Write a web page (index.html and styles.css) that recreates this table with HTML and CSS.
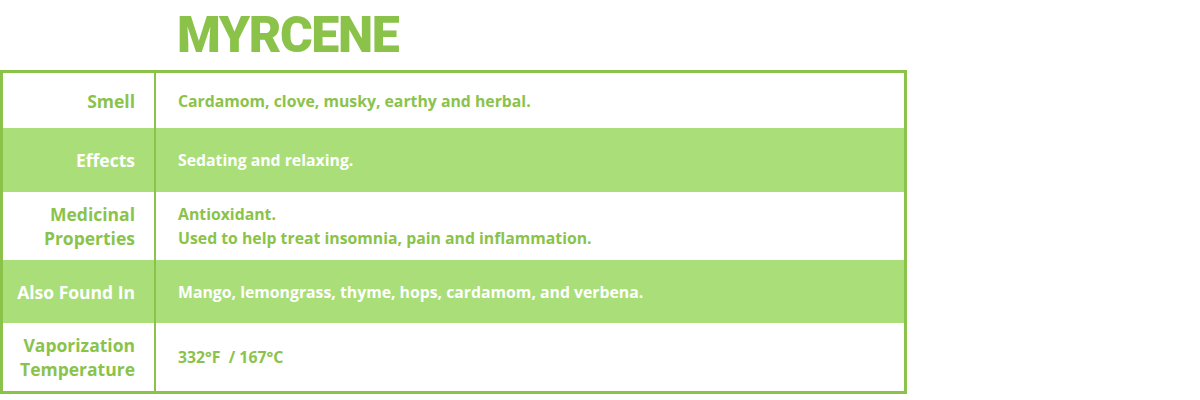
FILE: index.html
```html
<!DOCTYPE html>
<html>
<head>
<meta charset="utf-8">
<link rel="stylesheet" href="styles.css">
</head>
<body>
<div class="page">
  <h1 class="title">MYRCENE</h1>
  <div class="sheet">
    <div class="row row-a">
      <div class="label">Smell</div>
      <div class="value">Cardamom, clove, musky, earthy and herbal.</div>
    </div>
    <div class="row row-b alt">
      <div class="label">Effects</div>
      <div class="value">Sedating and relaxing.</div>
    </div>
    <div class="row row-c">
      <div class="label">Medicinal<br>Properties</div>
      <div class="value">Antioxidant.<br>Used to help treat insomnia, pain and inflammation.</div>
    </div>
    <div class="row row-d alt">
      <div class="label">Also Found In</div>
      <div class="value">Mango, lemongrass, thyme, hops, cardamom, and verbena.</div>
    </div>
    <div class="row row-e">
      <div class="label">Vaporization<br>Temperature</div>
      <div class="value">332°F &nbsp;/ 167°C</div>
    </div>
  </div>
</div>
</body>
</html>
```
FILE: styles.css
```css
* { box-sizing: border-box; }
html, body { margin: 0; padding: 0; background: #fff; }
body {
  font-family: "Open Sans", "Liberation Sans", sans-serif;
  color: #8bc34a;
}
.page { width: 907px; }
.title {
  margin: 0;
  padding: 5px 0 0 177px;
  height: 70px;
  font-family: Roboto, "Open Sans", sans-serif;
  font-size: 50px;
  line-height: 60px;
  font-weight: 900;
  color: #8bc34a;
  letter-spacing: -1.4px;
}
.sheet {
  border: 3px solid #8bc34a;
  display: flex;
  flex-direction: column;
}
.row {
  display: grid;
  grid-template-columns: 153px 1fr;
  align-items: stretch;
  font-weight: 700;
  line-height: 24px;
}
.row-a { height: 55px; }
.row-b { height: 64px; }
.row-c { height: 68px; }
.row-d { height: 63px; }
.row-e { height: 68px; }
.alt { background: #aade78; color: #fff; }
.label {
  display: flex;
  align-items: center;
  justify-content: flex-end;
  text-align: right;
  padding-right: 19px;
  font-size: 17.5px;
  border-right: 2px solid #8bc34a;
}
.value {
  display: flex;
  align-items: center;
  padding-left: 22px;
  font-size: 15.8px;
}
```
